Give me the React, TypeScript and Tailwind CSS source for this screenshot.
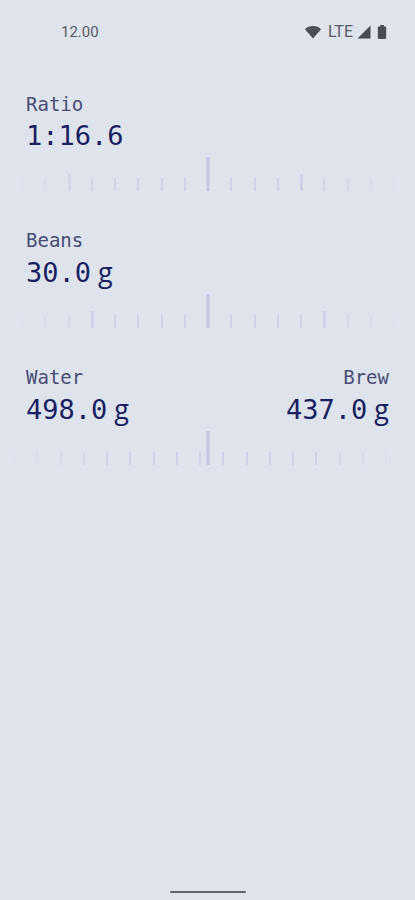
import { useState } from 'react';

interface Reading {
  label: string;
  value: number;
  prefix?: string;
  unit?: string;
}

interface DialProps {
  label: string;
  value: number;
  min: number;
  max: number;
  majors: number[];
  shift?: number;
  onChange: (value: number) => void;
}

const TICK_GAP = 23.25;
const TICKS = Array.from({ length: 17 }, (_, i) => i - 8);

function Value({ label, value, prefix, unit }: Reading) {
  return (
    <div className="text-[#1a1f62]">
      <p className="text-[19px] leading-[30px] text-[#484d74]">{label}</p>
      <p className="text-[27px] leading-[34px]">
        {prefix}
        {value.toFixed(1)}
        {unit && <span className="ml-[7px] font-['Open_Sans']">{unit}</span>}
      </p>
    </div>
  );
}

function Dial({ label, value, min, max, majors, shift = 0, onChange }: DialProps) {
  return (
    <div className="relative mt-1 h-[34px]">
      <svg className="h-full w-full" aria-hidden="true">
        <svg x="50%" overflow="visible">
          {TICKS.map((n) => {
            if (n === 0 && shift === 0) return null;
            const x = Math.round(n * TICK_GAP + shift);
            const major = majors.includes(n);
            // ticks fade out towards both edges of the screen
            const opacity = Math.min(1, Math.max(0.1, (190 - Math.abs(x)) / 80));
            return (
              <rect
                key={n}
                x={x}
                y={major ? 17 : 21}
                width={major ? 2 : 1}
                height={major ? 17 : 13}
                fill={major ? '#c6cbe8' : '#bdc1dc'}
                opacity={opacity}
              />
            );
          })}
          <rect x="-1" y="0" width="3" height="34" fill="#c3c6e5" />
        </svg>
      </svg>
      <input
        type="range"
        aria-label={label}
        min={min}
        max={max}
        step="0.1"
        value={value}
        onChange={(e) => onChange(Number(e.target.value))}
        className="absolute inset-0 h-full w-full cursor-pointer opacity-0"
      />
    </div>
  );
}

function StatusBar() {
  return (
    <header className="flex h-16 items-center justify-between pr-7 pl-[61px] font-['Roboto'] text-[15px] text-[#595c64]">
      <span>12.00</span>
      <div className="flex items-center text-[#484b51]">
        <svg width="18" height="14" viewBox="0 0 18 14" fill="currentColor">
          <path d="M9 13.5 1 4.2C3.2 2.1 5.9 1 9 1s5.8 1.1 8 3.2L9 13.5Z" />
          <path d="M2.6 5.8C6.2 2.9 11.8 2.9 15.4 5.8" fill="none" stroke="#5c5f66" strokeWidth="1" />
        </svg>
        <span className="ml-1.5 text-base text-[#595c64]">LTE</span>
        <svg className="ml-1" width="14" height="14" viewBox="0 0 14 14" fill="currentColor">
          <path d="M13.5.5v13H.5L13.5.5Z" />
        </svg>
        <svg className="ml-1.5" width="10" height="14" viewBox="0 0 10 14" fill="currentColor">
          <path d="M3.2 0h3.6v1.6H8c.7 0 1.2.5 1.2 1.1v10.1c0 .7-.5 1.2-1.2 1.2H2c-.7 0-1.2-.5-1.2-1.2V2.7c0-.6.5-1.1 1.2-1.1h1.2V0Z" />
        </svg>
      </div>
    </header>
  );
}

export default function App() {
  const [ratio, setRatio] = useState(16.6);
  const [beans, setBeans] = useState(30);

  const water = ratio * beans;
  // grounds hold back roughly twice their own weight
  const brew = water - beans * (61 / 30);

  return (
    <div className="flex min-h-screen flex-col bg-[#dfe3ec] font-['DejaVu_Sans_Mono',monospace]">
      <StatusBar />
      <main className="flex flex-1 flex-col gap-[34px] pt-[25px]">
        <section>
          <div className="px-[26px]">
            <Value label="Ratio" value={ratio} prefix="1:" />
          </div>
          <Dial label="Ratio" value={ratio} min={1} max={30} majors={[-6, 4]} onChange={setRatio} />
        </section>
        <section>
          <div className="px-[26px]">
            <Value label="Beans" value={beans} unit="g" />
          </div>
          <Dial label="Beans" value={beans} min={1} max={100} majors={[-5, 5]} onChange={setBeans} />
        </section>
        <section>
          <div className="flex justify-between px-[26px]">
            <Value label="Water" value={water} unit="g" />
            <div className="text-right">
              <Value label="Brew" value={brew} unit="g" />
            </div>
          </div>
          <Dial
            label="Water"
            value={water}
            min={1}
            max={3000}
            majors={[]}
            shift={-8}
            onChange={(grams) => setBeans(grams / ratio)}
          />
        </section>
      </main>
      <footer className="flex justify-center pb-[7px]">
        <div className="h-0.5 w-[76px] rounded-full bg-[#62656d]" />
      </footer>
    </div>
  );
}
